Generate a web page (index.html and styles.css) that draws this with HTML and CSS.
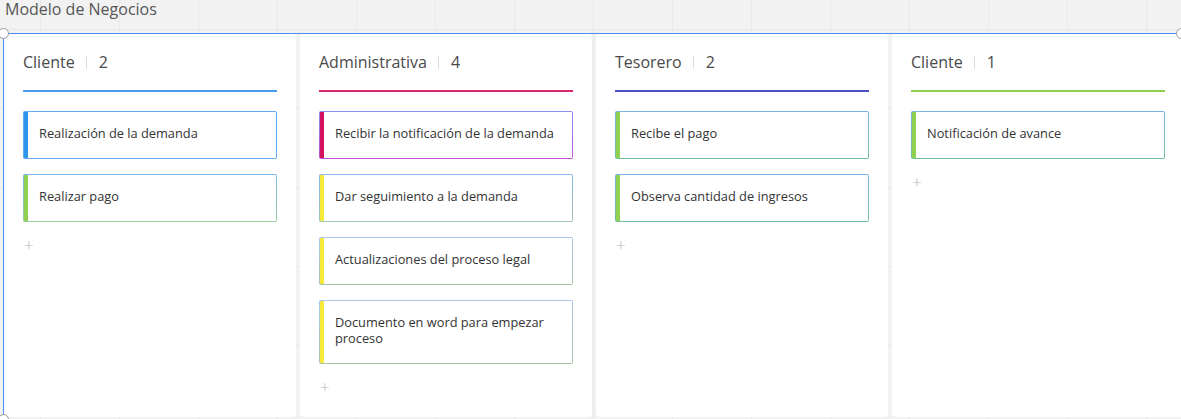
FILE: index.html
```html
<!DOCTYPE html>
<html lang="es">
<head>
<meta charset="utf-8">
<title>Modelo de Negocios</title>
<link rel="stylesheet" href="styles.css">
</head>
<body>
<div class="title">Modelo de Negocios</div>
<div class="frame">
  <span class="handle handle-tl"></span>
  <span class="handle handle-tr"></span>
  <span class="handle handle-bl"></span>
  <section class="column">
    <header class="col-head"><span class="col-name">Cliente</span><span class="sep"></span><span class="col-count">2</span></header>
    <div class="rule rule-blue"></div>
    <div class="cards">
      <div class="card card-blue"><span class="stripe stripe-blue"></span><div class="card-body">Realización de la demanda</div></div>
      <div class="card card-green"><span class="stripe stripe-green"></span><div class="card-body">Realizar pago</div></div>
    </div>
    <div class="add">+</div>
  </section>
  <section class="column">
    <header class="col-head"><span class="col-name">Administrativa</span><span class="sep"></span><span class="col-count">4</span></header>
    <div class="rule rule-pink"></div>
    <div class="cards">
      <div class="card card-purple"><span class="stripe stripe-pink"></span><div class="card-body">Recibir la notificación de la demanda</div></div>
      <div class="card card-soft"><span class="stripe stripe-yellow"></span><div class="card-body">Dar seguimiento a la demanda</div></div>
      <div class="card card-soft2"><span class="stripe stripe-yellow"></span><div class="card-body">Actualizaciones del proceso legal</div></div>
      <div class="card card-soft2"><span class="stripe stripe-yellow"></span><div class="card-body">Documento en word para empezar proceso</div></div>
    </div>
    <div class="add">+</div>
  </section>
  <section class="column">
    <header class="col-head"><span class="col-name">Tesorero</span><span class="sep"></span><span class="col-count">2</span></header>
    <div class="rule rule-indigo"></div>
    <div class="cards">
      <div class="card card-teal"><span class="stripe stripe-green"></span><div class="card-body">Recibe el pago</div></div>
      <div class="card card-teal"><span class="stripe stripe-green"></span><div class="card-body">Observa cantidad de ingresos</div></div>
    </div>
    <div class="add">+</div>
  </section>
  <section class="column">
    <header class="col-head"><span class="col-name">Cliente</span><span class="sep"></span><span class="col-count">1</span></header>
    <div class="rule rule-green"></div>
    <div class="cards">
      <div class="card card-teal"><span class="stripe stripe-green"></span><div class="card-body">Notificación de avance</div></div>
    </div>
    <div class="add">+</div>
  </section>
</div>
</body>
</html>
```
FILE: styles.css
```css
* { box-sizing: border-box; }
html, body { margin: 0; padding: 0; }
body {
  width: 1181px;
  height: 419px;
  overflow: hidden;
  font-family: "Open Sans", "Noto Sans", sans-serif;
  color: #333;
  background-color: #f2f2f2;
  background-image:
    linear-gradient(to right, #e8e8e8 1px, transparent 1px),
    linear-gradient(to bottom, #e8e8e8 1px, transparent 1px);
  background-size: 79px 79px;
  background-position: 40px 29px;
}
.title {
  height: 33px;
  padding-left: 5px;
  font-size: 16px;
  line-height: 18px;
  color: #555;
}
.frame {
  position: relative;
  margin-left: 3px;
  height: 386px;
  border-top: 1px solid #4d8df0;
  border-left: 1px solid #4d8df0;
  display: flex;
  gap: 4px;
}
.handle {
  position: absolute;
  width: 11px;
  height: 11px;
  border-radius: 50%;
  background: #fff;
  border: 1.5px solid #9a9a9a;
  top: -6px;
  z-index: 2;
}
.handle-tl { left: -6px; }
.handle-tr { left: 1172px; }
.handle-bl { left: -6px; top: 380px; }
.column {
  flex: 0 0 292px;
  background: #fff;
  border-radius: 4px;
  padding: 0 19px;
  height: 383px;
}
.col-head {
  display: flex;
  align-items: center;
  height: 22px;
  margin-top: 17px;
  font-size: 16px;
  color: #4a4a4a;
}
.sep {
  width: 1px;
  height: 13px;
  background: #dcdcdc;
  margin: 0 12px 0 11px;
}
.rule {
  height: 2px;
  margin-top: 17px;
}
.rule-blue { background: #4a9be8; }
.rule-pink { background: #d8266f; }
.rule-indigo { background: #4c4fc0; }
.rule-green { background: #8fd14f; }
.cards {
  margin-top: 19px;
  display: flex;
  flex-direction: column;
  gap: 15px;
  width: 254px;
}
.card {
  display: flex;
  padding: 1px;
  border-radius: 2px;
}
.card-blue { background: #62aaf2; }
.card-green { background: linear-gradient(#7eb9ef, #9dcc9a); }
.card-purple { background: linear-gradient(#8a8ff0, #c34fd0); }
.card-soft { background: linear-gradient(#86b8ec, #9ec4b6); }
.card-soft2 { background: linear-gradient(#a8c8ec, #a8c4a8); }
.card-teal { background: linear-gradient(#7ab2e6, #6fbf9a); }
.stripe {
  flex: 0 0 4px;
  border-radius: 1px 0 0 1px;
}
.stripe-blue { background: #2d95ec; }
.stripe-green { background: #8fd14f; }
.stripe-pink { background: #d5105f; }
.stripe-yellow { background: #f5e93a; }
.card-body {
  flex: 1;
  background: #fff;
  padding: 13px 12px 17px 11px;
  font-size: 12.8px;
  line-height: 16px;
  color: #333;
}
.add {
  margin-top: 13px;
  margin-left: 1px;
  font-size: 17px;
  line-height: 20px;
  color: #b8b8b8;
  font-weight: 300;
}
```
